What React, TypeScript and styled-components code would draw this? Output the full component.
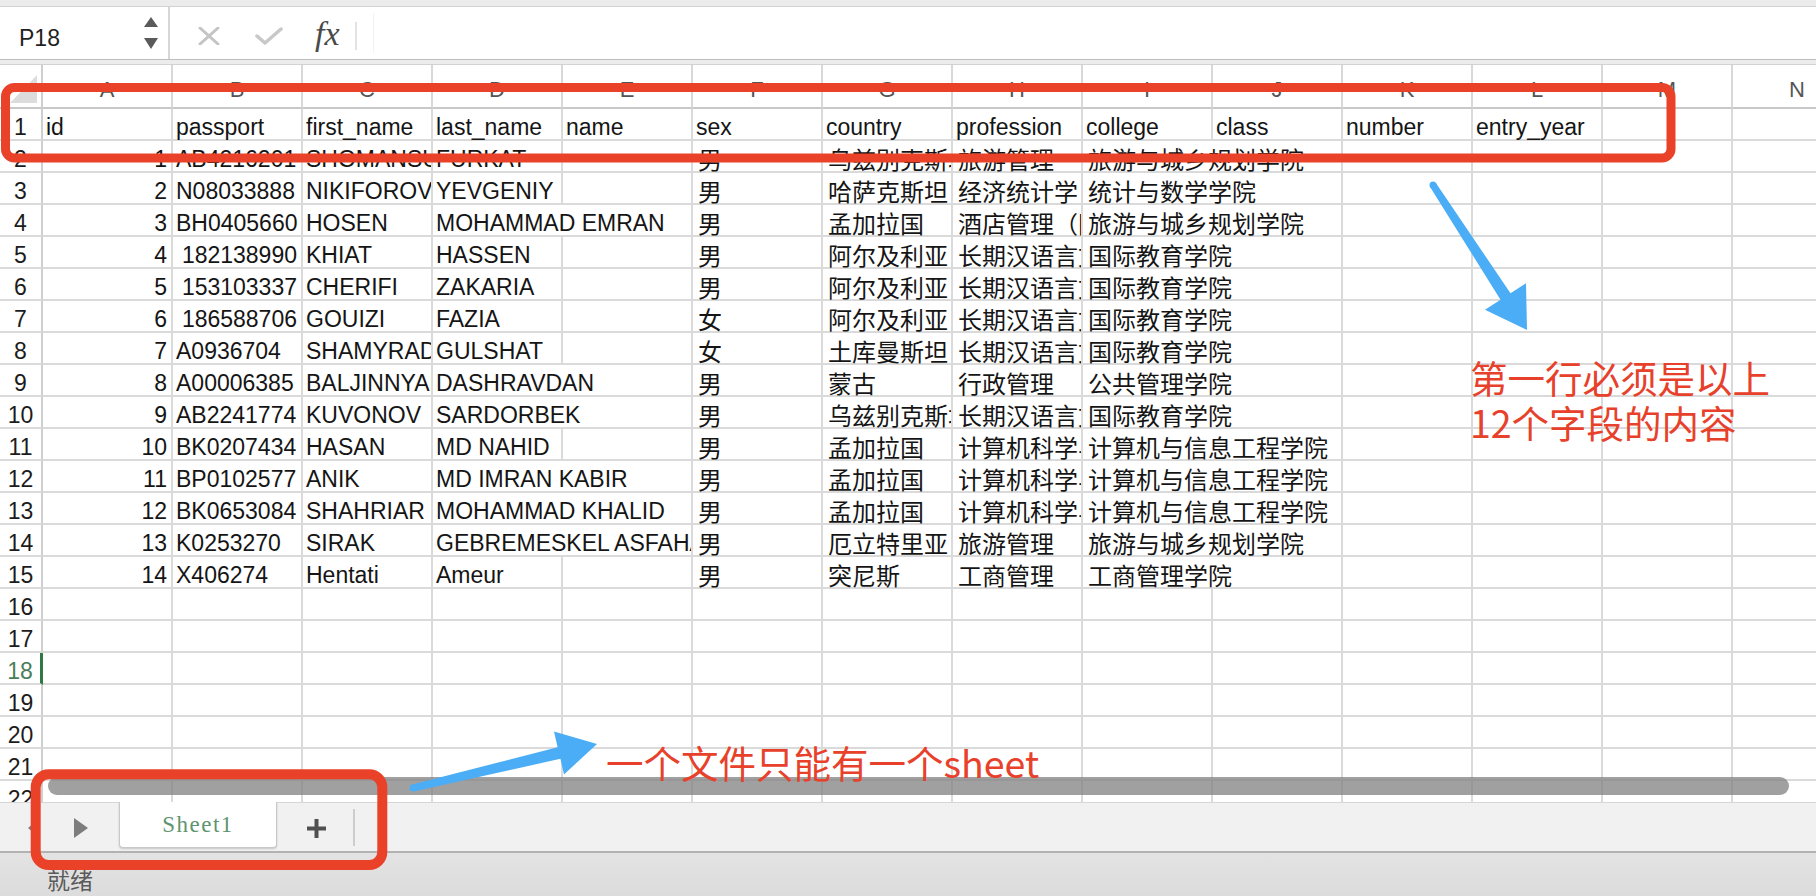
import React from 'react';
import styled, { createGlobalStyle } from 'styled-components';

const GlobalStyle = createGlobalStyle`
  html, body { margin: 0; padding: 0; width: 1816px; height: 896px; overflow: hidden; background: #fff; }
  #root { width: 1816px; height: 896px; }
`;

const Page = styled.div`
  position: relative;
  width: 1816px;
  height: 896px;
  display: flex;
  flex-direction: column;
  overflow: hidden;
  font-family: "Liberation Sans", "Noto Sans CJK SC", sans-serif;
  background: #fff;
`;

const TopStrip = styled.div`
  flex: none;
  height: 7px;
  box-sizing: border-box;
  background: #ececec;
  border-bottom: 1px solid #d2d2d2;
`;

const FormulaBar = styled.div`
  flex: none;
  height: 53px;
  box-sizing: border-box;
  display: flex;
  align-items: center;
  background: #fff;
  border-bottom: 1px solid #bdbdbd;
`;

const NameBox = styled.div`
  width: 170px;
  height: 100%;
  box-sizing: border-box;
  border-right: 2px solid #d6d6d6;
  display: flex;
  align-items: center;
  justify-content: space-between;
  padding: 0 10px 0 19px;
`;

const NameText = styled.span`
  font-size: 23px;
  color: #1f1f1f;
  margin-top: 10px;
`;

const Tools = styled.div`
  display: flex;
  align-items: center;
  height: 100%;
  padding: 6px 0 0 28px;
  box-sizing: border-box;
`;

const ToolIcon = styled.svg<{ $gap: number }>`
  margin-left: ${p => p.$gap}px;
  flex: none;
`;

const Fx = styled.span`
  margin-left: 32px;
  font-family: "Liberation Serif", serif;
  font-style: italic;
  font-size: 34px;
  color: #4a4a4a;
  line-height: 1;
  margin-top: -4px;
`;

const ToolSep = styled.div`
  width: 2px;
  height: 28px;
  margin-left: 15px;
  background: #e2e2e2;
`;

const FormulaInput = styled.div`
  flex: 1;
  height: 40px;
  margin-left: 16px;
  border-left: 1px solid #f2f2f2;
`;

const Band = styled.div`
  flex: none;
  height: 5px;
  box-sizing: border-box;
  background: #ececec;
  border-bottom: 1px solid #d2d2d2;
`;

const GridArea = styled.div`
  position: relative;
  flex: 1;
  overflow: hidden;
  background: #fff;
`;

const GridRow = styled.div`
  display: grid;
  grid-template-columns: 43px repeat(14, 130px);
`;

const Corner = styled.div`
  height: 44px;
  box-sizing: border-box;
  border-right: 2px solid #cfcfcf;
  border-bottom: 2px solid #c8c8c8;
  display: flex;
  align-items: flex-end;
  justify-content: flex-end;
  padding: 0 4px 4px 0;
`;

const CornerTriangle = styled.div`
  width: 0;
  height: 0;
  border-left: 27px solid transparent;
  border-bottom: 28px solid #dcdcdc;
`;

const ColHead = styled.div`
  height: 44px;
  box-sizing: border-box;
  border-right: 2px solid #d8d8d8;
  border-bottom: 2px solid #c8c8c8;
  text-align: center;
  line-height: 50px;
  font-size: 22px;
  color: #555;
  overflow: hidden;
`;

const RowHead = styled.div<{ $selected?: boolean }>`
  height: 32px;
  box-sizing: border-box;
  border-right: ${p => (p.$selected ? '3px solid #2f7a44' : '2px solid #cfcfcf')};
  border-bottom: 2px solid #dadada;
  text-align: center;
  line-height: 36px;
  font-size: 23px;
  color: ${p => (p.$selected ? '#4a7d58' : '#1c1c1c')};
  overflow-x: clip;
`;

const Cell = styled.div<{ $span: number; $right: boolean; $cjk: boolean }>`
  grid-column: span ${p => p.$span};
  height: 32px;
  box-sizing: border-box;
  border-right: 2px solid #dadada;
  border-bottom: 2px solid #dadada;
  padding: ${p => (p.$right ? '0 4px 0 0' : p.$cjk ? '0 0 0 5px' : '0 0 0 3px')};
  text-align: ${p => (p.$right ? 'right' : 'left')};
  font-family: ${p => (p.$cjk ? '"Noto Sans CJK SC", sans-serif' : '"Liberation Sans", "Noto Sans CJK SC", sans-serif')};
  font-size: ${p => (p.$cjk ? '24px' : '23px')};
  line-height: 36px;
  color: #151515;
  white-space: nowrap;
  overflow-x: clip;
  overflow-y: visible;
`;

const ScrollThumb = styled.div`
  position: absolute;
  left: 48px;
  right: 27px;
  bottom: 7px;
  height: 18px;
  border-radius: 9px;
  background: rgba(128, 128, 128, 0.75);
`;

const TabBar = styled.div`
  flex: none;
  height: 51px;
  box-sizing: border-box;
  display: flex;
  align-items: flex-start;
  background: #f1f1f1;
  border-top: 1px solid #d6d6d6;
  border-bottom: 2px solid #b2b2b2;
  padding-left: 28px;
`;

const NavArrow = styled.svg<{ $gap: number }>`
  flex: none;
  margin-left: ${p => p.$gap}px;
  margin-top: 15px;
`;

const SheetTab = styled.div`
  flex: none;
  margin-left: 31px;
  margin-top: -1px;
  width: 158px;
  height: 46px;
  box-sizing: border-box;
  background: #fff;
  border: 1px solid #c8c8c8;
  border-top: none;
  border-radius: 0 0 4px 4px;
  box-shadow: 0 1px 2px rgba(0, 0, 0, 0.18);
  display: flex;
  align-items: center;
  justify-content: center;
  font-family: "Liberation Serif", "Noto Serif CJK SC", serif;
  font-size: 23px;
  letter-spacing: 1.5px;
  color: #5f9470;
`;

const AddTab = styled.svg`
  flex: none;
  margin-left: 29px;
  margin-top: 15px;
`;

const TabSep = styled.div`
  flex: none;
  width: 2px;
  height: 37px;
  margin-left: 26px;
  margin-top: 6px;
  background: #cdcdcd;
`;

const StatusBar = styled.div`
  flex: none;
  height: 43px;
  box-sizing: border-box;
  display: flex;
  align-items: center;
  padding: 8px 0 0 47px;
  background: linear-gradient(#e3e3e3, #dcdcdc);
  font-family: "Noto Sans CJK SC", sans-serif;
  font-size: 23px;
  color: #5a5a5a;
`;

const Overlay = styled.svg`
  position: absolute;
  left: 0;
  top: 0;
  width: 1816px;
  height: 896px;
  pointer-events: none;
  z-index: 5;
`;

const Note = styled.div<{ $x: number; $y: number; $size: number }>`
  position: absolute;
  left: ${p => p.$x}px;
  top: ${p => p.$y}px;
  z-index: 6;
  font-family: "Noto Sans CJK SC", sans-serif;
  font-size: ${p => p.$size}px;
  line-height: 45px;
  color: #e8412b;
  white-space: nowrap;
  pointer-events: none;
`;

const COLS = ['A', 'B', 'C', 'D', 'E', 'F', 'G', 'H', 'I', 'J', 'K', 'L', 'M', 'N'];

type RowData = { cells: string[]; ov: number[] };

const HEADER: RowData = {
  cells: ['id', 'passport', 'first_name', 'last_name', 'name', 'sex', 'country', 'profession', 'college', 'class', 'number', 'entry_year'],
  ov: [],
};

const DATA: RowData[] = [
  { cells: ['1', 'AB4216201', 'SHOMANSUROV', 'FURKAT', '', '男', '乌兹别克斯坦', '旅游管理', '旅游与城乡规划学院'], ov: [8] },
  { cells: ['2', 'N08033888', 'NIKIFOROV', 'YEVGENIY', '', '男', '哈萨克斯坦', '经济统计学', '统计与数学学院'], ov: [8] },
  { cells: ['3', 'BH0405660', 'HOSEN', 'MOHAMMAD EMRAN', '', '男', '孟加拉国', '酒店管理（国际）', '旅游与城乡规划学院'], ov: [3, 8] },
  { cells: ['4', '182138990', 'KHIAT', 'HASSEN', '', '男', '阿尔及利亚', '长期汉语言文化', '国际教育学院'], ov: [8] },
  { cells: ['5', '153103337', 'CHERIFI', 'ZAKARIA', '', '男', '阿尔及利亚', '长期汉语言文化', '国际教育学院'], ov: [8] },
  { cells: ['6', '186588706', 'GOUIZI', 'FAZIA', '', '女', '阿尔及利亚', '长期汉语言文化', '国际教育学院'], ov: [8] },
  { cells: ['7', 'A0936704', 'SHAMYRAD', 'GULSHAT', '', '女', '土库曼斯坦', '长期汉语言文化', '国际教育学院'], ov: [8] },
  { cells: ['8', 'A00006385', 'BALJINNYAM', 'DASHRAVDAN', '', '男', '蒙古', '行政管理', '公共管理学院'], ov: [3, 8] },
  { cells: ['9', 'AB2241774', 'KUVONOV', 'SARDORBEK', '', '男', '乌兹别克斯坦', '长期汉语言文化', '国际教育学院'], ov: [3, 8] },
  { cells: ['10', 'BK0207434', 'HASAN', 'MD NAHID', '', '男', '孟加拉国', '计算机科学与技术', '计算机与信息工程学院'], ov: [8] },
  { cells: ['11', 'BP0102577', 'ANIK', 'MD IMRAN KABIR', '', '男', '孟加拉国', '计算机科学与技术', '计算机与信息工程学院'], ov: [3, 8] },
  { cells: ['12', 'BK0653084', 'SHAHRIAR', 'MOHAMMAD KHALID', '', '男', '孟加拉国', '计算机科学与技术', '计算机与信息工程学院'], ov: [3, 8] },
  { cells: ['13', 'K0253270', 'SIRAK', 'GEBREMESKEL ASFAHA', '', '男', '厄立特里亚', '旅游管理', '旅游与城乡规划学院'], ov: [3, 8] },
  { cells: ['14', 'X406274', 'Hentati', 'Ameur', '', '男', '突尼斯', '工商管理', '工商管理学院'], ov: [8] },
];

const ROWS: RowData[] = [HEADER, ...DATA];
while (ROWS.length < 22) ROWS.push({ cells: [], ov: [] });

const CJK = /[\u3000-\u9fff\uff00-\uffef]/;

function renderCells(row: RowData, isHeader: boolean) {
  const out: React.ReactNode[] = [];
  for (let c = 0; c < COLS.length; c++) {
    const v = row.cells[c] ?? '';
    const span = row.ov.includes(c) ? 2 : 1;
    const right = !isHeader && /^\d+$/.test(v);
    out.push(
      <Cell key={c} $span={span} $right={right} $cjk={CJK.test(v)}>
        {v}
      </Cell>
    );
    if (span === 2) c++;
  }
  return out;
}

export default function App() {
  return (
    <Page>
      <GlobalStyle />
      <TopStrip />
      <FormulaBar>
        <NameBox>
          <NameText>P18</NameText>
          <svg width="14" height="33" viewBox="0 0 14 33">
            <polygon points="7,0 14,10 0,10" fill="#5a5a5a" />
            <polygon points="0,21 14,21 7,32" fill="#5a5a5a" />
          </svg>
        </NameBox>
        <Tools>
          <ToolIcon $gap={0} width="22" height="18" viewBox="0 0 22 18">
            <path d="M2 1 L20 17 M20 1 L2 17" stroke="#c4c4c4" strokeWidth="3" strokeLinecap="round" fill="none" />
          </ToolIcon>
          <ToolIcon $gap={35} width="28" height="18" viewBox="0 0 28 18">
            <polyline points="2,9 10,16 26,2" stroke="#c8c8c8" strokeWidth="3.5" strokeLinecap="round" strokeLinejoin="round" fill="none" />
          </ToolIcon>
          <Fx>fx</Fx>
          <ToolSep />
        </Tools>
        <FormulaInput />
      </FormulaBar>
      <Band />
      <GridArea>
        <GridRow>
          <Corner>
            <CornerTriangle />
          </Corner>
          {COLS.map(c => (
            <ColHead key={c}>{c}</ColHead>
          ))}
        </GridRow>
        {ROWS.map((row, i) => (
          <GridRow key={i}>
            <RowHead $selected={i + 1 === 18}>{i + 1}</RowHead>
            {renderCells(row, i === 0)}
          </GridRow>
        ))}
        <ScrollThumb />
      </GridArea>
      <TabBar>
        <NavArrow $gap={0} width="12" height="20" viewBox="0 0 12 20">
          <polygon points="12,0 12,20 0,10" fill="#7d7d7d" />
        </NavArrow>
        <NavArrow $gap={34} width="14" height="20" viewBox="0 0 14 20">
          <polygon points="0,0 14,10 0,20" fill="#7d7d7d" />
        </NavArrow>
        <SheetTab>Sheet1</SheetTab>
        <AddTab width="21" height="21" viewBox="0 0 21 21">
          <path d="M10.5 1 V20 M1 10.5 H20" stroke="#505050" strokeWidth="4" fill="none" />
        </AddTab>
        <TabSep />
      </TabBar>
      <StatusBar>就绪</StatusBar>

      <Overlay viewBox="0 0 1816 896">
        <rect x="5.5" y="87.5" width="1665.5" height="70.5" rx="9" ry="9" fill="none" stroke="#ea4129" strokeWidth="9" />
        <rect x="35.7" y="774.3" width="346.6" height="90.7" rx="13" ry="13" fill="none" stroke="#ea4129" strokeWidth="10" />
        <polygon
          points="1435.9,183.1 1510.5,293.2 1526,283.2 1527,330 1485,309.8 1500.5,299.8 1430.1,186.9"
          fill="#4badf5"
        />
        <circle cx="1433" cy="185" r="3.5" fill="#4badf5" />
        <polygon
          points="412.2,784.6 557.6,747.2 554,731.6 597,744 564,774.4 560.4,758.8 413.8,791.4"
          fill="#4badf5"
        />
        <circle cx="413" cy="788" r="3.5" fill="#4badf5" />
      </Overlay>
      <Note $x={1470} $y={354} $size={37.5}>
        第一行必须是以上
        <br />
        12个字段的内容
      </Note>
      <Note $x={606} $y={739} $size={37.5}>
        一个文件只能有一个sheet
      </Note>
    </Page>
  );
}
